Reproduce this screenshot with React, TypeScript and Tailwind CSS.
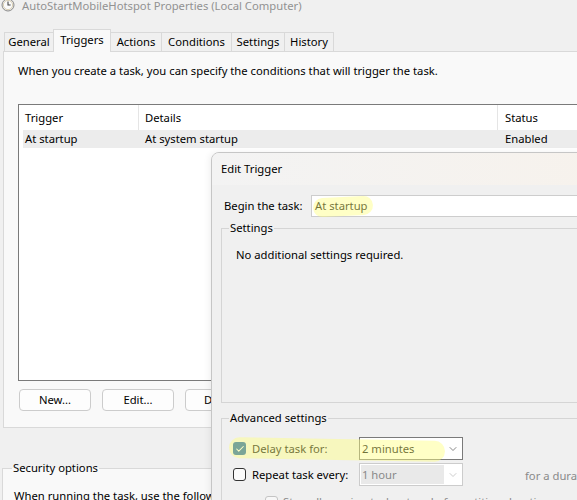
import { Check, ChevronDown } from "lucide-react";

const tabs = [
  { label: "General", width: "w-[50px]" },
  { label: "Triggers", width: "w-[58px]", active: true },
  { label: "Actions", width: "w-[52px]" },
  { label: "Conditions", width: "w-[71px]" },
  { label: "Settings", width: "w-[54px]" },
  { label: "History", width: "w-[50px]" },
];

function ClockIcon() {
  return (
    <svg width="14" height="14" viewBox="0 0 14 14" className="-mt-[2px] shrink-0">
      <circle cx="7" cy="7" r="6" fill="#ececec" stroke="#8a8a8a" strokeWidth="1" />
      <circle cx="7" cy="7" r="4.6" fill="#fafafa" stroke="#c9b98a" strokeWidth="0.6" />
      <path d="M7 3.6V7h2.6" fill="none" stroke="#444" strokeWidth="1.1" />
    </svg>
  );
}

function Chevron({ muted }: { muted?: boolean }) {
  return (
    <ChevronDown
      aria-hidden="true"
      className={muted ? "h-[12px] w-[12px] text-[#b8b8b8]" : "h-[12px] w-[12px] text-[#555]"}
      strokeWidth={1.4}
    />
  );
}

export default function App() {
  return (
    <div className="relative h-[500px] w-[577px] overflow-hidden bg-[#f0f0f0] font-['Noto_Sans',sans-serif] text-[11.25px] leading-[16px] text-black">
      {/* title bar */}
      <div className="flex h-[14px] items-start gap-[7px] overflow-hidden pl-[1px]">
        <ClockIcon />
        <span className="-mt-[2px] text-[#929292]">AutoStartMobileHotspot Properties (Local Computer)</span>
      </div>

      {/* tabs */}
      <div className="mt-[15px] flex h-[22px] items-end pl-[4px]">
        {tabs.map((tab, i) =>
          tab.active ? (
            <div
              key={tab.label}
              className={`relative z-10 -mb-px flex h-[23px] justify-center border border-b-0 border-[#d9d9d9] bg-[#f9f9f9] pt-[2px] ${tab.width} ${i > 0 ? "-ml-px" : ""}`}
            >
              {tab.label}
            </div>
          ) : (
            <div
              key={tab.label}
              className={`flex h-[19px] items-center justify-center border border-b-0 border-[#d9d9d9] bg-[#f0f0f0] ${tab.width} ${i > 0 ? "-ml-px" : ""}`}
            >
              {tab.label}
            </div>
          ),
        )}
      </div>

      {/* tab panel */}
      <div className="ml-[3px] h-[377px] w-[620px] border border-[#d9d9d9] bg-[#f9f9f9] pl-[14px] pt-[11px]">
        <p>When you create a task, you can specify the conditions that will trigger the task.</p>

        <div className="mt-[25px] h-[277px] w-[600px] border border-[#7a7a7a] bg-white">
          <div className="flex h-[25px] items-center">
            <div className="w-[119px] pl-[6px]">Trigger</div>
            <div className="flex h-full w-[359px] items-center border-l border-[#e5e5e5] pl-[6px]">Details</div>
            <div className="flex h-full items-center border-l border-[#e5e5e5] pl-[7px]">Status</div>
          </div>
          <div className="ml-[4px] flex h-[18px] items-center bg-[#ececec]">
            <div className="w-[115px] pl-[2px]">At startup</div>
            <div className="w-[359px] pl-[7px]">At system startup</div>
            <div className="pl-[8px]">Enabled</div>
          </div>
        </div>

        <div className="ml-[1px] mt-[8px] flex gap-[11px]">
          {["New...", "Edit...", "Delete"].map((label) => (
            <button
              key={label}
              type="button"
              className="flex h-[22px] w-[72px] items-center justify-center rounded-[4px] border border-[#cccccc] bg-[#fdfdfd]"
            >
              {label}
            </button>
          ))}
        </div>
      </div>

      {/* security options (behind the dialog) */}
      <fieldset className="ml-[2px] mt-[32px] h-[80px] w-[620px] border-l border-t border-[#d9d9d9] bg-[#f9f9f9]">
        <legend className="ml-[9px] px-[1px] leading-[16px]">Security options</legend>
        <p className="mt-[12px] pl-[11px]">When running the task, use the following user account:</p>
      </fieldset>

      {/* Edit Trigger dialog */}
      <div className="absolute left-[211px] top-[152px] h-[380px] w-[420px] overflow-hidden rounded-tl-[8px] border border-[#c6c6c6] bg-[#f0f0f0] shadow-[-2px_0_6px_rgba(0,0,0,0.06)]">
        <div className="flex h-[32px] items-center bg-linear-to-r from-[#f3f3f3] to-[#f7f2ec] pl-[9px]">
          Edit Trigger
        </div>

        <div className="mt-[10px] flex h-[22px] items-center">
          <div className="w-[99px] pl-[12px]">Begin the task:</div>
          <div className="relative flex h-[22px] flex-1 items-center border-y border-l border-[#cdcdcd] bg-white pl-[3px]">
            At startup
            <div className="absolute left-[1px] top-[1px] h-[19px] w-[60px] -rotate-3 rounded-full bg-[#ffff80]/45" />
          </div>
        </div>

        <fieldset className="ml-[9px] mt-[3px] h-[183px] border border-[#d5d5d5]">
          <legend className="ml-[7px] px-[1px] leading-[16px]">Settings</legend>
          <p className="pl-[14px] pt-[11px]">No additional settings required.</p>
        </fieldset>

        <fieldset className="ml-[9px] mt-[7px] h-[140px] border border-[#d5d5d5]">
          <legend className="ml-[7px] px-[1px] leading-[16px]">Advanced settings</legend>

          <div className="relative mt-[11px] flex h-[23px] items-center">
            <div className="ml-[11px] flex h-[13px] w-[13px] items-center justify-center rounded-[3px] bg-[#0d5baa]">
              <Check className="h-[10px] w-[10px] text-white" strokeWidth={2.5} />
            </div>
            <div className="ml-[6px] w-[107px]">Delay task for:</div>
            <div className="flex h-[23px] w-[104px] items-center justify-between border border-[#7a7a7a] bg-white pl-[2px] pr-[3px]">
              2 minutes
              <Chevron />
            </div>
            <div className="absolute left-[7px] top-[2px] h-[21px] w-[216px] rotate-[1deg] rounded-full bg-[#ffff80]/45" />
          </div>

          <div className="mt-[3px] flex h-[23px] items-center">
            <div className="ml-[11px] h-[13px] w-[13px] rounded-[3px] border border-[#333333] bg-[#fbfbfb]" />
            <div className="ml-[6px] w-[107px]">Repeat task every:</div>
            <div className="flex h-[23px] w-[104px] items-center justify-between border border-[#cccccc] bg-white pr-[3px]">
              <div className="ml-[1px] flex h-[19px] w-[83px] items-center bg-[#e9e9e9] pl-[1px] text-[#8a8a8a]">1 hour</div>
              <Chevron muted />
            </div>
            <div className="ml-[62px] mt-[3px] text-[#8a8a8a]">for a duration of:</div>
          </div>

          <div className="mt-[8px] flex items-center">
            <div className="ml-[43px] h-[13px] w-[13px] rounded-[3px] border border-[#c4c4c4] bg-[#f7f7f7]" />
            <div className="ml-[5px] text-[#8a8a8a]">Stop all running tasks at end of repetition duration</div>
          </div>
        </fieldset>
      </div>
    </div>
  );
}
